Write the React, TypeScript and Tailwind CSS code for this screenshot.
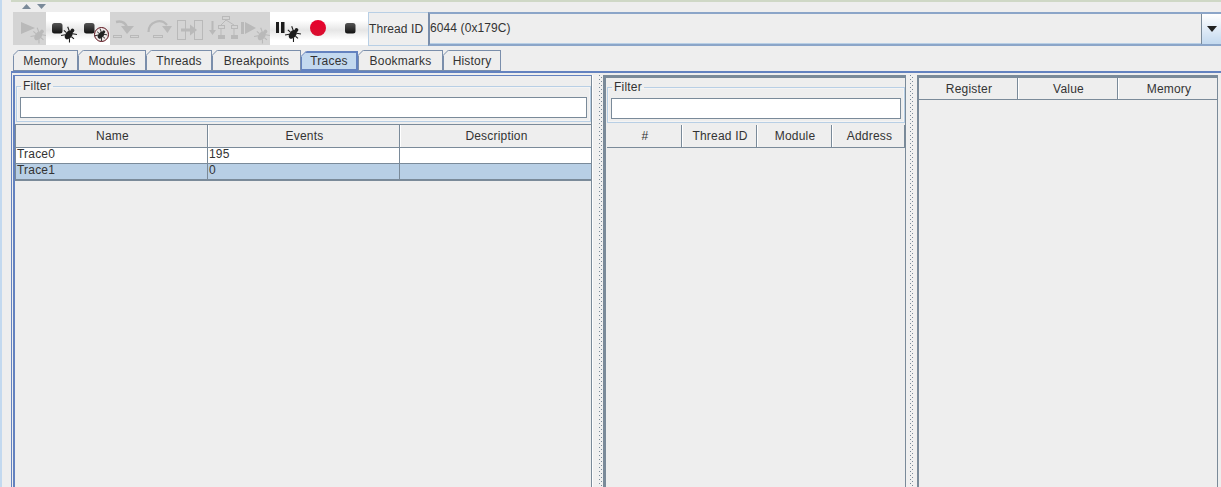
import React from "react";

const G = "#b9b9b9";

function Bug({ x, y, c = "#1c1c1c", s = 1.1 }: { x: number; y: number; c?: string; s?: number }) {
  return (
    <g transform={`translate(${x} ${y}) scale(${s}) rotate(40)`} stroke={c} strokeWidth="1" fill={c}>
      <ellipse cx="0" cy="1" rx="3" ry="4.6" stroke="none" />
      <circle cx="0" cy="-4.2" r="1.7" stroke="none" />
      <path d="M-2 -2 L-5.5 -4 M2 -2 L5.5 -4 M-3 0.8 L-6 0.8 M3 0.8 L6 0.8 M-2.5 3 L-5 6 M2.5 3 L5 6" fill="none" />
    </g>
  );
}

function Stop({ x, y }: { x: number; y: number }) {
  return <rect x={x} y={y} width="10.5" height="10.5" rx="2.5" fill="url(#stopGrad)" />;
}

function Btn({ children, off, w = 32 }: { children: React.ReactNode; off?: boolean; w?: number }) {
  return (
    <div className={`h-[33px] shrink-0 ${off ? "bg-[#d4d4d4]" : "bg-[linear-gradient(to_bottom,#ffffff_0%,#ffffff_25%,#e6e6e6_55%,#ffffff_85%,#ffffff_100%)]"}`} style={{ width: w }}>
      <svg width={w} height="33" viewBox={`0 0 ${w} 33`} className="block">
        {children}
      </svg>
    </div>
  );
}

function Tab({ label, w, active }: { label: string; w: number; active?: boolean }) {
  const line = active ? "#6382bf" : "#7a8eab";
  return (
    <div
      className={`relative flex items-center justify-center shrink-0 border-t border-r border-l ${
        active
          ? "h-[20px] mt-px bg-[#c3d9ef] border-b-2 border-[#6382bf] border-t-2 border-r-2"
          : "h-[21px] bg-[#eeeeee] border-b border-[#7a8eab]"
      } text-[12px] tracking-[0.2px] text-[#333333]`}
      style={{ width: w }}
    >
      <svg width="6" height="6" viewBox="0 0 6 6" className={`absolute ${active ? "-top-[2px]" : "-top-px"} -left-px block`}>
        <path d="M0 0 L6 0 L0 6 Z" fill="#eeeeee" />
        <path d="M0 5.5 L5.5 0" stroke={line} fill="none" />
      </svg>
      {label}
    </div>
  );
}

function Dots() {
  return (
    <div className="flex gap-[1px] h-full">
      <div className="w-px h-full bg-[repeating-linear-gradient(to_bottom,#7a8a99_0px,#7a8a99_1px,transparent_1px,transparent_4px)]" />
      <div className="w-px h-full mt-[2px] bg-[repeating-linear-gradient(to_bottom,#7a8a99_0px,#7a8a99_1px,transparent_1px,transparent_4px)]" />
    </div>
  );
}

function Filter() {
  return (
    <fieldset className="border border-[#b8cfe5] px-[3px] pb-[3px] shadow-[inset_0_0_0_1px_#f4f4f4] min-w-0">
      <legend className="ml-px px-[2px] text-[12px] leading-[13px] text-[#333333] tracking-[0.2px]">Filter</legend>
      <div className="mt-[4px] h-[21px] bg-white border border-[#7a8a99]" />
    </fieldset>
  );
}

function HeaderCell({ label, w, last }: { label: string; w: number; last?: boolean }) {
  return (
    <div
      className={`h-full flex items-center justify-center shrink-0 pl-[2px] text-[12px] tracking-[0.2px] text-[#333333] ${last ? "" : "border-r border-[#7a8a99] shadow-[1px_0_0_#ffffff]"}`}
      style={{ width: w }}
    >
      {label}
    </div>
  );
}

function Row({ cells, selected }: { cells: string[]; selected?: boolean }) {
  const widths = [192, 192, 191];
  return (
    <div className={`flex h-[16px] border-b border-[#7a8a99] ${selected ? "bg-[#b8cfe5]" : "bg-white"}`}>
      {cells.map((c, i) => (
        <div
          key={i}
          className={`pl-px shrink-0 text-[12px] leading-[13px] tracking-[0.2px] text-[#333333] ${i < 2 ? "border-r border-[#7a8a99]" : ""}`}
          style={{ width: widths[i] }}
        >
          {c}
        </div>
      ))}
    </div>
  );
}

export default function App() {
  return (
    <div className="w-[1221px] h-[487px] overflow-hidden bg-[#eeeeee] flex font-['Liberation_Sans',Arial,sans-serif]">
      <div className="w-[2px] h-full bg-[#c3d9ef] shrink-0" />
      <div className="flex-1 min-w-0 flex flex-col ml-[9px]">
        <div className="h-[2px] bg-[#cfd8c6] shrink-0" />
        <div className="h-[10px] shrink-0 pl-[11px] pt-[1px]">
          <svg width="26" height="7" viewBox="0 0 26 7" className="block">
            <path d="M0 6 L4.5 1 L9 6 Z" fill="#7a8a99" />
            <path d="M15 1 L24 1 L19.5 6 Z" fill="#7a8a99" />
          </svg>
        </div>
        <div className="h-[34px] flex shrink-0 pl-[2px]">
          <svg width="0" height="0" className="absolute">
            <defs>
              <linearGradient id="stopGrad" x1="0" y1="0" x2="0" y2="1">
                <stop offset="0" stopColor="#555555" />
                <stop offset="1" stopColor="#111111" />
              </linearGradient>
              <linearGradient id="recGrad" x1="0" y1="0" x2="0" y2="1">
                <stop offset="0" stopColor="#e8002c" />
                <stop offset="1" stopColor="#d81030" />
              </linearGradient>
            </defs>
          </svg>
          <Btn off w={33}>
            <path d="M8 10 L22 16 L8 22 Z" fill={G} />
            <Bug x={26} y={23} c={G} />
          </Btn>
          <Btn>
            <Stop x={6} y={11} />
            <Bug x={23.5} y={22} />
          </Btn>
          <Btn>
            <Stop x={6} y={11} />
            <circle cx="23.5" cy="22.5" r="7" fill="#f0eaea" stroke="#5a0d16" strokeWidth="1" />
            <Bug x={23.5} y={22.5} s={0.85} c="#222222" />
          </Btn>
          <Btn off>
            <rect x="3.5" y="23.5" width="8" height="2" fill="none" stroke={G} />
            <rect x="20.5" y="23.5" width="8" height="2" fill="none" stroke={G} />
            <path d="M6 10 Q14 8 17 15" fill="none" stroke={G} strokeWidth="2.4" />
            <path d="M11 14 L24 14 L17 22 Z" fill={G} />
          </Btn>
          <Btn off>
            <rect x="11.5" y="23.5" width="9" height="2" fill="none" stroke={G} />
            <path d="M6.5 20 A10.5 10.5 0 0 1 25 13" fill="none" stroke={G} strokeWidth="2.2" />
            <path d="M20 14 L30 14 L25.5 21 Z" fill={G} />
          </Btn>
          <Btn off>
            <rect x="3.5" y="8.5" width="8" height="19" fill="none" stroke={G} />
            <rect x="20.5" y="8.5" width="8" height="19" fill="none" stroke={G} />
            <path d="M7 18 L18 18" stroke={G} strokeWidth="3" />
            <path d="M16 12.5 L23 18 L16 23.5 Z" fill={G} />
          </Btn>
          <Btn off>
            <path d="M6.5 9 L6.5 19" stroke={G} strokeWidth="2" />
            <path d="M3 18 L10 18 L6.5 23 Z" fill={G} />
            <rect x="16.5" y="4.5" width="7" height="3" fill="none" stroke={G} />
            <rect x="12.5" y="13.5" width="6" height="3" fill="none" stroke={G} />
            <rect x="25.5" y="13.5" width="6" height="3" fill="none" stroke={G} />
            <path d="M20 8 L15 13 M20 8 L28 13 M15 17 L15 23 M28 17 L28 23" stroke={G} />
            <rect x="12" y="23" width="7" height="4" fill={G} />
            <rect x="25" y="23" width="7" height="4" fill={G} />
          </Btn>
          <Btn off>
            <rect x="3" y="10" width="3" height="12" fill={G} />
            <path d="M7 10 L18 16 L7 22 Z" fill={G} />
            <Bug x={24.5} y={23} c={G} />
          </Btn>
          <Btn>
            <rect x="6" y="10" width="3" height="11" fill="#1c1c1c" />
            <rect x="11" y="10" width="3.5" height="11" fill="#1c1c1c" />
            <Bug x={23.5} y={21.5} />
          </Btn>
          <Btn>
            <circle cx="16" cy="16" r="8" fill="url(#recGrad)" />
          </Btn>
          <Btn w={34}>
            <Stop x={11} y={11} />
          </Btn>
          <div className="h-[34px] w-[60px] shrink-0 border border-[#b8cfe5] border-r-0 flex items-center text-[12px] tracking-[0.1px] text-[#333333]">
            Thread ID
          </div>
          <div className="flex-1 min-w-0 h-[34px] flex border-y-2 border-l-2 border-y-[#8ba5c8] border-l-[#7a8eab] shadow-[inset_0_-1px_0_#b8cfe5]">
            <div className="flex-1 flex items-center text-[12px] tracking-[0.1px] text-[#333333] border-r border-[#7a8a99] pb-[3px]">
              6044 (0x179C)
            </div>
            <div className="w-[19px] shrink-0 flex items-center justify-center bg-[linear-gradient(to_bottom,#ffffff,#c3d9ef)] pb-px">
              <svg width="10" height="6" viewBox="0 0 10 6" className="block">
                <path d="M0 0 L10 0 L5 6 Z" fill="#222222" />
              </svg>
            </div>
          </div>
        </div>
        <div className="h-[21px] mt-[4px] flex shrink-0 pl-[2px]">
          <Tab label="Memory" w={65} />
          <Tab label="Modules" w={68} />
          <Tab label="Threads" w={66} />
          <Tab label="Breakpoints" w={89} />
          <Tab label="Traces" w={57} active />
          <Tab label="Bookmarks" w={85} />
          <Tab label="History" w={58} />
        </div>
        <div className="flex-1 min-h-0 border-l border-t-2 border-[#6382bf] flex pl-px pt-[2px] pr-[3px]">
          <div className="w-[579px] h-full shrink-0 border-l-2 border-t border-r border-[#6382bf] border-r-[#7a8a99] pt-[4px]">
            <div className="mr-0 ml-px">
              <Filter />
            </div>
            <div className="mt-[2px] w-[577px] border border-[#7a8a99]">
              <div className="flex h-[23px] border-b border-[#7a8a99]">
                <HeaderCell label="Name" w={192} />
                <HeaderCell label="Events" w={192} />
                <HeaderCell label="Description" w={191} last />
              </div>
              <Row cells={["Trace0", "195", ""]} />
              <Row cells={["Trace1", "0", ""]} selected />
            </div>
          </div>
          <div className="w-[11px] h-full shrink-0 bg-[#f0f0f0] pl-[6px] border-l border-white">
            <Dots />
          </div>
          <div className="w-[302px] h-full shrink-0 border-l-[3px] border-t-[3px] border-[#7a8a99] pl-px pt-[3px]">
            <Filter />
            <div className="mt-[2px] flex h-[23px] border-b border-r border-[#7a8a99]">
              <HeaderCell label="#" w={75} />
              <HeaderCell label="Thread ID" w={75} />
              <HeaderCell label="Module" w={75} />
              <HeaderCell label="Address" w={73} last />
            </div>
          </div>
          <div className="w-[12px] h-full shrink-0 bg-[#f0f0f0] pl-[4px] border-l border-[#7a8a99]">
            <Dots />
          </div>
          <div className="flex-1 min-w-0 h-full border-l-2 border-t-[3px] border-r border-[#7a8a99]">
            <div className="flex h-[22px] border-b border-[#7a8a99]">
              <HeaderCell label="Register" w={99} />
              <HeaderCell label="Value" w={100} />
              <HeaderCell label="Memory" w={100} last />
            </div>
          </div>
        </div>
      </div>
    </div>
  );
}
